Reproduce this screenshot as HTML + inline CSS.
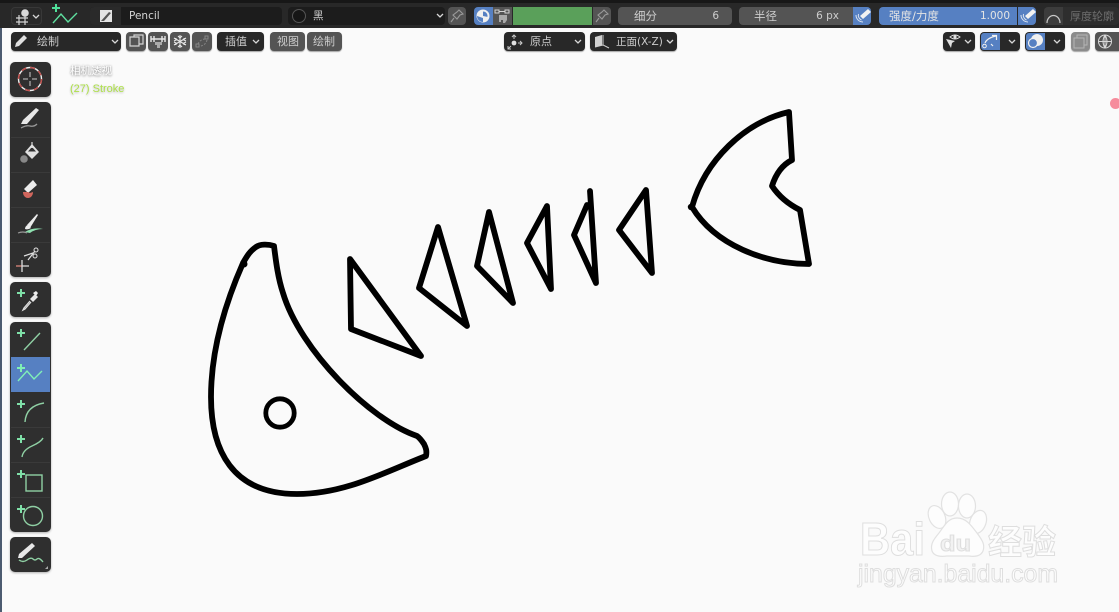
<!DOCTYPE html>
<html><head><meta charset="utf-8">
<style>
html,body{margin:0;padding:0;width:1119px;height:612px;overflow:hidden;background:#fafafa;font-family:"DejaVu Sans","Noto Sans CJK SC",sans-serif}
.a{position:absolute;box-sizing:border-box}
.b{position:absolute;box-sizing:border-box;border-radius:4px;color:#cdcdcd;font-size:10.5px;line-height:19px;white-space:nowrap}
.d{background:#282828}.g{background:#545454}.f{background:#1c1c1c}.bl{background:#5680c2}
.r2{box-shadow:0 1px 1px rgba(0,0,0,.35);line-height:20px!important}
.t{position:absolute;white-space:nowrap}
svg{position:absolute;overflow:visible}
.ch{fill:none;stroke:#d8d8d8;stroke-width:1.3}
.i{fill:none;stroke:#d4d4d4;stroke-width:1.2}
.gn{fill:none;stroke:#8fd0a4;stroke-width:1.4}
.gp{fill:#7fe0a8}
.tb{position:absolute;left:10px;width:41px;background:#2f2f2f;border-radius:5px;box-shadow:0 1px 2px rgba(0,0,0,.3)}
</style></head><body>
<div class="a" style="left:0;top:0;width:1119px;height:28px;background:#282828"></div>
<div class="a" style="left:0;top:0;width:1119px;height:3px;background:#171717"></div>
<div class="a" style="left:0;top:28px;width:2px;height:584px;background:#4c5b70"></div>

<!-- row 1 -->
<div class="b" style="left:11px;top:7px;width:31px;height:18px;background:#2a2a2a;border:1px solid #383838"></div>
<svg style="left:0;top:0" width="90" height="28"><path class="i" d="M16 18H28M16 22H28M19 15V25M25 15V25"/><circle cx="25" cy="13" r="3.8" fill="#d8d8d8"/><path class="ch" d="M33 15l3 3 3-3"/>
<path style="fill:#4fe09a" d="M55 4h2v3h3v2h-3v3h-2V9h-3V7h3z"/><path fill="none" stroke="#5fe0a0" stroke-width="1.4" d="M53 23L61 14 68 22 77 13"/></svg>
<div class="b f" style="left:90px;top:7px;width:192px;height:18px"><div class="a" style="left:0;top:0;width:31px;height:18px;background:#2a2a2a;border-radius:4px 0 0 4px"></div><span class="t" style="left:39px;top:0;color:#d4d4d4">Pencil</span></div>
<svg style="left:100px;top:10px" width="12" height="13"><path d="M0 0H12V12H0z" fill="#e4e4e4"/><path d="M1 11L9 2 11 3 4 11z" fill="#555"/></svg>
<div class="b f" style="left:288px;top:7px;width:157px;height:18px"><span class="t" style="left:25px;top:0">黑</span></div>
<svg style="left:290px;top:8px" width="160" height="16"><circle cx="9" cy="8" r="6.5" fill="#161616" stroke="#555"/><path class="ch" d="M147 6l3 3 3-3"/></svg>
<div class="b g" style="left:448px;top:7px;width:18px;height:18px"></div>
<svg style="left:450px;top:9px" width="15" height="15"><path fill="none" stroke="#9a9a9a" stroke-width="1.1" d="M9 1l4 4-3 1-3 4-4-4 4-3zM4 9L1 13"/></svg>
<div class="b bl" style="left:474px;top:7px;width:19px;height:18px;border-radius:4px 0 0 4px"></div>
<svg style="left:475px;top:8px" width="16" height="16"><circle cx="8" cy="8" r="6.5" fill="#f0f0f0"/><path d="M8 3.5a4.5 4.5 0 0 1 4.4 5.4L8 8z" fill="#5680c2"/><path d="M2 8a6 6 0 0 0 6 6V10z" fill="#5680c2"/></svg>
<div class="a g" style="left:493px;top:7px;width:19px;height:18px"></div>
<svg style="left:494px;top:9px" width="17" height="15"><path fill="none" stroke="#d4d4d4" d="M1 1h4v3H1zM11 1h4v3h-4zM5 2.5h6"/><path fill="#aaa" d="M5 6h8v5l-2 3h-2v-3H7v2H5z"/></svg>
<div class="a" style="left:513px;top:7px;width:79px;height:18px;background:#5aa05a"></div>
<div class="b g" style="left:593px;top:7px;width:18px;height:18px;border-radius:0 4px 4px 0"></div>
<svg style="left:595px;top:9px" width="15" height="15"><path fill="none" stroke="#9a9a9a" stroke-width="1.1" d="M9 1l4 4-3 1-3 4-4-4 4-3zM4 9L1 13"/></svg>
<div class="b g" style="left:618px;top:7px;width:114px;height:18px"><span class="t" style="left:16px;top:0;font-size:11.5px">细分</span><span class="t" style="right:13px;top:0">6</span></div>
<div class="b g" style="left:739px;top:7px;width:114px;height:18px;border-radius:4px 0 0 4px"><span class="t" style="left:15px;top:0;font-size:11.5px">半径</span><span class="t" style="right:14px;top:0">6 px</span></div>
<div class="b bl" style="left:853px;top:7px;width:18px;height:18px;border-radius:0 4px 4px 0"></div>
<div class="b bl" style="left:879px;top:7px;width:138px;height:18px;border-radius:4px 0 0 4px"><span class="t" style="left:10px;top:0;color:#e4e4e4;font-size:11.5px">强度/力度</span><span class="t" style="right:7px;top:0;color:#e4e4e4">1.000</span></div>
<div class="b bl" style="left:1018px;top:7px;width:18px;height:18px;border-radius:0 4px 4px 0"></div>
<svg style="left:0;top:0" width="1119" height="28"><path fill="#f2f2f2" d="M860 16l8-7 3 3-8 7z"/><path fill="none" stroke="#dce4f0" d="M856 15a7 7 0 0 0 7 7M858.500 14a5 5 0 0 0 3 6"/><path fill="#f2f2f2" d="M1025 16l8-7 3 3-8 7z"/><path fill="none" stroke="#dce4f0" d="M1021 15a7 7 0 0 0 7 7M1023.500 14a5 5 0 0 0 3 6"/></svg>
<div class="b" style="left:1044px;top:7px;width:75px;height:18px;background:#2e2e2e"><div class="a" style="left:0;top:0;width:19px;height:18px;background:#3c3c3c;border-radius:4px 0 0 4px"></div><span class="t" style="left:26px;top:0;color:#6e6e6e;font-size:11px">厚度轮廓</span></div>
<svg style="left:1046px;top:12px" width="16" height="14"><path fill="none" stroke="#c8c8c8" stroke-width="1.2" d="M1 11a6.500 7.500 0 0 1 13 0"/></svg>

<!-- row 2 -->
<div class="b d r2" style="left:11px;top:32px;width:110px;height:19px"><span class="t" style="left:26px;top:0;font-size:11px">绘制</span></div>
<svg style="left:11px;top:32px" width="110" height="19"><path fill="#e0e0e0" d="M4 15l1-4 8-8 3 3-8 8z"/><path class="ch" d="M101 8l3 3 3-3"/></svg>
<div class="b g r2" style="left:126px;top:32px;width:20px;height:19px"></div>
<div class="b g r2" style="left:148px;top:32px;width:20px;height:19px"></div>
<div class="b g r2" style="left:170px;top:32px;width:20px;height:19px"></div>
<div class="b g r2" style="left:192px;top:32px;width:20px;height:19px"></div>
<svg style="left:0;top:0" width="220" height="60"><path class="i" d="M130 37h9v9h-9zM134 37v-2h9v9h-4"/>
<path fill="none" stroke="#e8e8e8" stroke-width="1.4" d="M151 36v6M154 36v6M162 36v6M165 36v6M151 39h14"/><path fill="#aaa" d="M155 42h7v3h-2v3h-3v-3h-2z"/>
<path fill="none" stroke="#e8e8e8" stroke-width="1.1" d="M180 35v13M174 38l12 7M186 38l-12 7M178 36l2 2 2-2M178 47l2-2 2 2M174 41l2-1 0-2M186 41l-2-1 0-2M174 42l2 1 0 2M186 42l-2 1 0 2"/>
<path fill="none" stroke="#868686" d="M196 44h3v3h-3zM205 36h3v3h-3z"/><path fill="none" stroke="#868686" d="M198 44a8 8 0 0 1 7-5M207 40a8 8 0 0 1-6 6" stroke-dasharray="2 1.5"/></svg>
<div class="b d r2" style="left:217px;top:32px;width:47px;height:19px"><span class="t" style="left:8px;top:0;font-size:11px">插值</span></div>
<svg style="left:217px;top:32px" width="47" height="19"><path class="ch" d="M36 8l3 3 3-3"/></svg>
<div class="b g r2" style="left:270px;top:32px;width:35px;height:19px"><span class="t" style="left:7px;top:0;font-size:11px">视图</span></div>
<div class="b g r2" style="left:307px;top:32px;width:35px;height:19px"><span class="t" style="left:6px;top:0;font-size:11px">绘制</span></div>
<div class="b d r2" style="left:504px;top:32px;width:81px;height:19px"><span class="t" style="left:26px;top:0;font-size:11px">原点</span></div>
<svg style="left:504px;top:32px" width="81" height="19"><circle cx="10" cy="11" r="2.4" fill="#e0e0e0"/><path fill="none" stroke="#c8c8c8" d="M10 7V3M8 5l2-2 2 2M14 11h4M16 9l2 2-2 2M7 14l-3 3M4 14v3h3"/><path class="ch" d="M71 8l3 3 3-3"/></svg>
<div class="b d r2" style="left:590px;top:32px;width:87px;height:19px"><span class="t" style="left:26px;top:0;font-size:10.5px">正面(X-Z)</span></div>
<svg style="left:590px;top:32px" width="87" height="19"><path fill="#d0d0d0" d="M5 5l7-2v10l-7 2z"/><path fill="none" stroke="#d0d0d0" d="M13 3v10l6 3M5 15l8-2"/><path class="ch" d="M77 8l3 3 3-3"/></svg>

<div class="b d r2" style="left:943px;top:32px;width:32px;height:19px"></div>
<svg style="left:943px;top:32px" width="32" height="19"><path fill="#e0e0e0" d="M3 7l9 2-3 2-1 5z"/><path fill="none" stroke="#e0e0e0" d="M7 5q5-4 10 0q-5 4-10 0z"/><circle cx="12" cy="5" r="1.6" fill="#e0e0e0"/><path class="ch" d="M22 8l3 3 3-3"/></svg>
<div class="b d r2" style="left:980px;top:32px;width:40px;height:19px"><div class="a bl" style="left:1px;top:1px;width:19px;height:17px;border-radius:3px 0 0 3px"></div></div>
<svg style="left:980px;top:32px" width="40" height="19"><circle cx="4.500" cy="14" r="1.800" fill="none" stroke="#f0f0f0"/><path fill="none" stroke="#f0f0f0" stroke-width="1.200" d="M5 11q2-5 11-7M12 3.500h4.500V8M11 12l2 2"/><path class="ch" d="M29 8l3 3 3-3"/></svg>
<div class="b d r2" style="left:1025px;top:32px;width:40px;height:19px"><div class="a bl" style="left:1px;top:1px;width:19px;height:17px;border-radius:3px 0 0 3px"></div></div>
<svg style="left:1025px;top:32px" width="40" height="19"><circle cx="12" cy="8" r="6" fill="#f0f0f0"/><circle cx="8" cy="11" r="4.500" fill="#5680c2" stroke="#f0f0f0" stroke-width="1.200"/><path class="ch" d="M29 8l3 3 3-3"/></svg>
<div class="b r2" style="left:1071px;top:32px;width:19px;height:19px;background:#8b8b8b"></div>
<svg style="left:1071px;top:32px" width="19" height="19"><path fill="none" stroke="#b4b4b4" d="M3 6h10v10H3zM6 6V3h10v10h-3"/></svg>
<div class="b g r2" style="left:1095px;top:32px;width:24px;height:19px;border-radius:4px 0 0 4px"></div>
<svg style="left:1095px;top:32px" width="24" height="19"><circle cx="10" cy="9.500" r="6.500" fill="none" stroke="#d8d8d8"/><path fill="none" stroke="#d8d8d8" d="M3.500 9.500h13M10 3v13M10 3q-4 6.500 0 13M10 3q4 6.500 0 13"/></svg>

<!-- overlay text -->
<div class="t" style="left:70px;top:64px;font-size:10.500px;line-height:14px;color:#fff;text-shadow:0 1px 2px #999,0 0 2px #aaa">相机透视</div>
<div class="t" style="left:70px;top:82px;font-family:'Liberation Sans',sans-serif;font-size:11px;line-height:14px;color:#aee04a;text-shadow:0 1px 2px #bbb">(27) Stroke</div>

<!-- tool shelf -->
<div class="tb" style="top:62px;height:35px"></div>
<div class="tb" style="top:102px;height:175px"></div>
<div class="tb" style="top:282px;height:35px"></div>
<div class="tb" style="top:322px;height:210px"></div>
<div class="a" style="left:11px;top:357px;width:39px;height:35px;background:#5680c2"></div>
<div class="tb" style="top:537px;height:35px"></div>
<svg style="left:0;top:0" width="60" height="612">
<path stroke="#3a3a3a" d="M11 137.500H50M11 172.500H50M11 207.500H50M11 242.500H50M11 427.500H50M11 462.500H50M11 497.500H50"/>
<circle cx="30" cy="79" r="11.500" fill="none" stroke="#eee" stroke-width="1.400"/><circle cx="30" cy="79" r="11.500" fill="none" stroke="#c0504d" stroke-width="1.500" stroke-dasharray="5 4"/><path stroke="#aaa" stroke-width="1.300" d="M30 72v5M30 81v5M23 79h5M32 79h5"/>
<path fill="#e8e8e8" d="M21 124l2-4 13-12 3 2-12 14z"/><path fill="none" stroke="#999" stroke-width="1.300" d="M21 128q5-3 9-2t7-2"/>
<path fill="#e0e0e0" d="M32 144l7 8-7 7-7-7z"/><path fill="#2f2f2f" d="M32 147l4 4.500H28z"/><path fill="none" stroke="#e0e0e0" stroke-width="1.200" d="M32 142v6"/><circle cx="24" cy="159" r="3.800" fill="#888"/>
<path fill="#ececec" d="M24 189l9-9 4 5-9 8z"/><path fill="#d0655c" d="M23 192h5l2 1 3-1a5 5.500 0 0 1-10 1z"/>
<path fill="#ececec" d="M27 225l10-11 1 1-8 13z"/><path fill="#ececec" d="M25 229q0-3 3-4l3 3q-3 2-6 1z"/><path fill="#8fe0b0" d="M25 232q8-5 18-3-8 0-13 4z"/><path fill="none" stroke="#999" stroke-width="1.200" d="M18 233q5-2 9 0"/>
<path stroke="#e0e0e0" stroke-width="1.200" fill="none" d="M24 256l9-3M28 260l7-9"/><circle cx="35" cy="256" r="2" fill="none" stroke="#e0e0e0"/><circle cx="36" cy="250" r="2" fill="none" stroke="#e0e0e0"/>
<path stroke="#d9857a" stroke-width="1.300" d="M16 266h6"/><path stroke="#ddd" stroke-width="1.300" d="M22 260v12M22 266h7"/>
<path class="gp" d="M20 289h2v3h3v2h-3v3h-2v-3h-3v-2h3z"/><path fill="#e8e8e8" d="M30 299l5-5 3 3-5 5z"/><path fill="#eee" d="M33 293l3-2 2 2-2 3z"/><path fill="none" stroke="#ddd" stroke-width="1.300" d="M30 301l-6 7 -1 2 2-1 6-7"/>
<path class="gp" d="M20 329h2v3h3v2h-3v3h-2v-3h-3v-2h3z"/><path class="gn" d="M24 350L40 333"/>
<path d="M20 364h2v3h3v2h-3v3h-2v-3h-3v-2h3z" fill="#7ff0b4"/><path fill="none" stroke="#80f0b8" stroke-width="1.400" d="M18 381L27 371 34 379 42 371"/>
<path class="gp" d="M20 400h2v3h3v2h-3v3h-2v-3h-3v-2h3z"/><path class="gn" d="M25 422q1-16 19-19"/>
<path class="gp" d="M20 435h2v3h3v2h-3v3h-2v-3h-3v-2h3z"/><path class="gn" d="M22 457q1-7 10-11t11-8"/>
<path class="gp" d="M20 470h2v3h3v2h-3v3h-2v-3h-3v-2h3z"/><rect x="26" y="475" width="16" height="16" class="gn"/>
<path class="gp" d="M20 505h2v3h3v2h-3v3h-2v-3h-3v-2h3z"/><circle cx="33" cy="516" r="9.500" class="gn"/>
<path fill="#e8e8e8" d="M18 558l1-4 13-11 3 3-13 12z"/><path class="gn" d="M19 560q4 3 8 0t6-1 4 0t6 3"/><path fill="#aaa" d="M48 569h-3l3-3z"/>
</svg>

<!-- drawing -->
<svg style="left:0;top:0" width="1119" height="612">
<g fill="none" stroke="#000" stroke-width="5.800" stroke-linejoin="round" stroke-linecap="round">
<path d="M274 246C268 244 260 244 256 247C250 251 247 256 243 263C228 297 211 345 211 397C211 450 232 494 297 494C345 494 385 472 426 456C427 451 426 448 424 444C422 441 420 438 417 436C370 420 300 350 283 293C278 278 276 262 274 246Z"/>
<path d="M350 259L421 356 351 329Z"/>
<circle cx="280" cy="413" r="14.200" stroke-width="4.800"/>
<path d="M438 227L467 326 419 288Z"/>
<path d="M489 212L513 303 477 266Z"/>
<path d="M547 206L551 289 527 243Z"/>
<path d="M590 191L596 283 574 235 587 205"/>
<path d="M646 190L652 273 619 230Z"/>
<path d="M692 207C705 160 745 122 789 112L792 160Q778 167 772 186Q782 201 800 210L809 264C765 264 715 245 692 207Z"/>
</g>
<circle cx="244" cy="264" r="3.500" fill="#000"/>
<circle cx="691" cy="207" r="3.200" fill="#000"/>
</svg>
<div class="a" style="left:1110px;top:98px;width:11px;height:11px;border-radius:50%;background:#f68c9c"></div>

<!-- watermark -->
<svg style="left:840px;top:480px" width="279" height="132">
<g fill="#fdfdfd" stroke="#e2e2e2" stroke-width="1.200">
<ellipse cx="97" cy="37" rx="8" ry="12" transform="rotate(-25 97 37)"/>
<ellipse cx="110" cy="24" rx="8.500" ry="12"/>
<ellipse cx="127" cy="26" rx="8.500" ry="12"/>
<ellipse cx="138" cy="42" rx="8" ry="12" transform="rotate(20 138 42)"/>
<path d="M117 38c9 0 14 7 20 15 6 8 8 12 6 18-2 5-8 6-14 5h-22c-7 1-13 0-15-5-2-7 2-12 7-18 6-8 9-15 18-15z"/>
</g>
<g font-family="Liberation Sans, sans-serif" fill="#fdfdfd" stroke="#dedede" stroke-width="1">
<text x="20" y="75" font-size="46" font-weight="700" textLength="65" lengthAdjust="spacingAndGlyphs">Bai</text>
<text x="100" y="71" font-size="22" font-weight="700" fill="#f2f2f2" textLength="31" lengthAdjust="spacingAndGlyphs">du</text>
<text x="148" y="74" font-size="34" font-weight="700" font-family="Liberation Sans, Noto Sans CJK SC, sans-serif" textLength="68" lengthAdjust="spacingAndGlyphs">经验</text>
<text x="18" y="102" font-size="25" textLength="200" lengthAdjust="spacingAndGlyphs">jingyan.baidu.com</text>
</g>
</svg>
</body></html>
